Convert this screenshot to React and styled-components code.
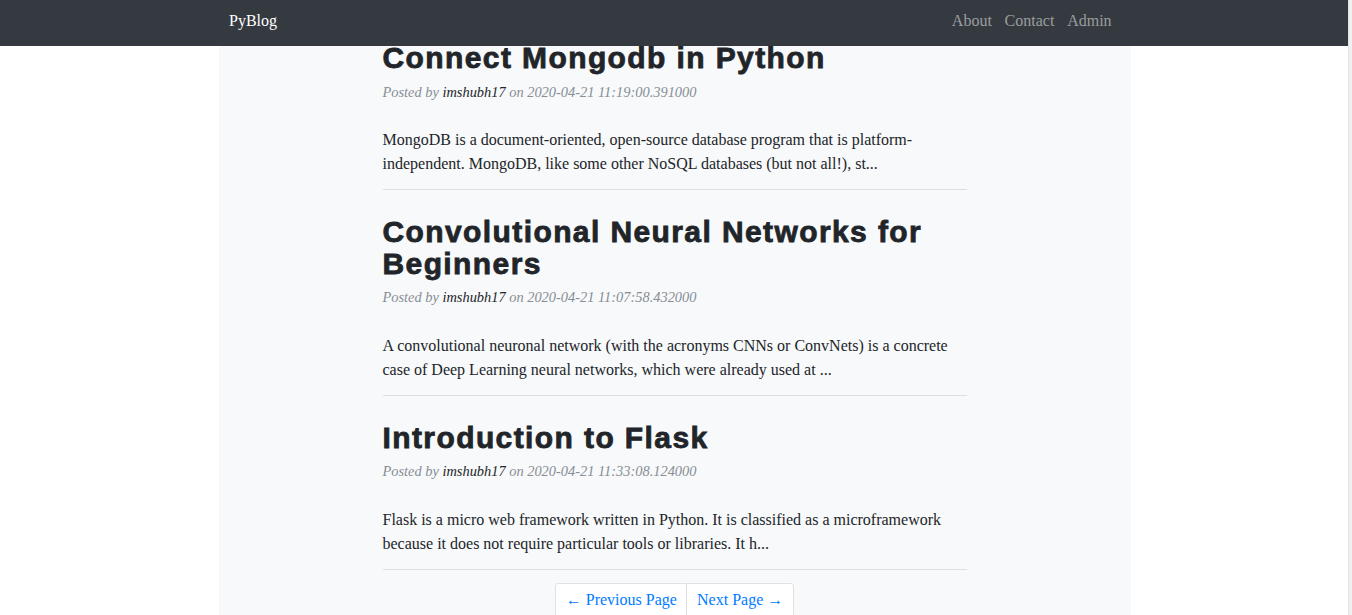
import React from 'react';
import styled, { createGlobalStyle } from 'styled-components';

const GlobalStyle = createGlobalStyle`
  html, body {
    margin: 0;
    padding: 0;
    background: #fff;
  }
  body {
    font-family: 'Liberation Serif', 'Times New Roman', serif;
    color: #212529;
    padding-right: 3px;
  }
`;

// thin overlay scrollbar seen at the right edge of the shot
const ScrollTrack = styled.div`
  position: fixed;
  top: 0;
  right: 0;
  bottom: 0;
  width: 4px;
  background: #f0f0f0;
  border-left: 1px solid #e2e2e2;
  box-sizing: border-box;
  z-index: 20;
`;

const NavBar = styled.nav`
  position: fixed;
  top: 0;
  left: 0;
  right: 4px;
  height: 46px;
  background: #343a40;
  z-index: 10;
`;

const NavInner = styled.div`
  width: 912px;
  box-sizing: border-box;
  margin: 0 auto;
  padding: 0 12px 0 11px;
  height: 100%;
  display: flex;
  align-items: center;
  justify-content: space-between;
`;

const Brand = styled.a`
  color: #fff;
  font-size: 16px;
  text-decoration: none;
  margin-top: -4px;
`;

const NavLinks = styled.div`
  display: flex;
  margin-top: -4px;
`;

const NavLink = styled.a`
  color: rgba(255, 255, 255, 0.5);
  font-size: 16px;
  padding: 0 6.4px;
  text-decoration: none;
`;

const Page = styled.main`
  width: 912px;
  margin: 0 auto;
  background: #f8f9fa;
  min-height: 640px;
  padding-top: 42px;
`;

const Column = styled.div`
  width: 584px;
  margin: 0 auto;
`;

const Preview = styled.article`
  & + & {
    margin-top: 26px;
  }
`;

const Title = styled.h2`
  font-family: 'Liberation Sans', Arial, sans-serif;
  font-weight: 800;
  font-size: 30px;
  line-height: 31.7px;
  letter-spacing: 1.4px;
  -webkit-text-stroke: 0.8px #212529;
  margin: 0 0 8px;
  color: #212529;
`;

const Meta = styled.p`
  font-style: italic;
  font-size: 14.4px;
  line-height: 21.6px;
  color: #868e96;
  margin: 0;
`;

const Author = styled.span`
  color: #212529;
`;

const Excerpt = styled.p`
  font-size: 16px;
  line-height: 24px;
  margin: 25px 0 0;
`;

const Divider = styled.hr`
  border: 0;
  border-top: 1px solid rgba(0, 0, 0, 0.1);
  margin: 12.7px 0 0;
`;

const Pager = styled.div`
  display: flex;
  justify-content: center;
  margin-top: 13px;
  padding-bottom: 30px;
`;

const PageButton = styled.a`
  display: block;
  font-size: 16px;
  line-height: 20px;
  padding: 6.4px 9.6px;
  color: #007bff;
  background: #fff;
  border: 1px solid #dee2e6;
  text-decoration: none;
  border-radius: ${p => (p.$first ? '3px 0 0 3px' : '0 3px 3px 0')};
  margin-left: ${p => (p.$first ? '0' : '-1px')};
`;

const posts = [
  {
    title: 'Connect Mongodb in Python',
    date: '2020-04-21 11:19:00.391000',
    text: 'MongoDB is a document-oriented, open-source database program that is platform-independent. MongoDB, like some other NoSQL databases (but not all!), st...',
  },
  {
    title: 'Convolutional Neural Networks for Beginners',
    date: '2020-04-21 11:07:58.432000',
    text: 'A convolutional neuronal network (with the acronyms CNNs or ConvNets) is a concrete case of Deep Learning neural networks, which were already used at ...',
  },
  {
    title: 'Introduction to Flask',
    date: '2020-04-21 11:33:08.124000',
    text: 'Flask is a micro web framework written in Python. It is classified as a microframework because it does not require particular tools or libraries. It h...',
  },
];

export default function App() {
  return (
    <>
      <GlobalStyle />
      <NavBar>
        <NavInner>
          <Brand href="#">PyBlog</Brand>
          <NavLinks>
            <NavLink href="#">About</NavLink>
            <NavLink href="#">Contact</NavLink>
            <NavLink href="#">Admin</NavLink>
          </NavLinks>
        </NavInner>
      </NavBar>
      <ScrollTrack />
      <Page>
        <Column>
          {posts.map(post => (
            <Preview key={post.title}>
              <Title>{post.title}</Title>
              <Meta>
                Posted by <Author>imshubh17</Author> on {post.date}
              </Meta>
              <Excerpt>{post.text}</Excerpt>
              <Divider />
            </Preview>
          ))}
          <Pager>
            <PageButton href="#" $first>← Previous Page</PageButton>
            <PageButton href="#">Next Page →</PageButton>
          </Pager>
        </Column>
      </Page>
    </>
  );
}
